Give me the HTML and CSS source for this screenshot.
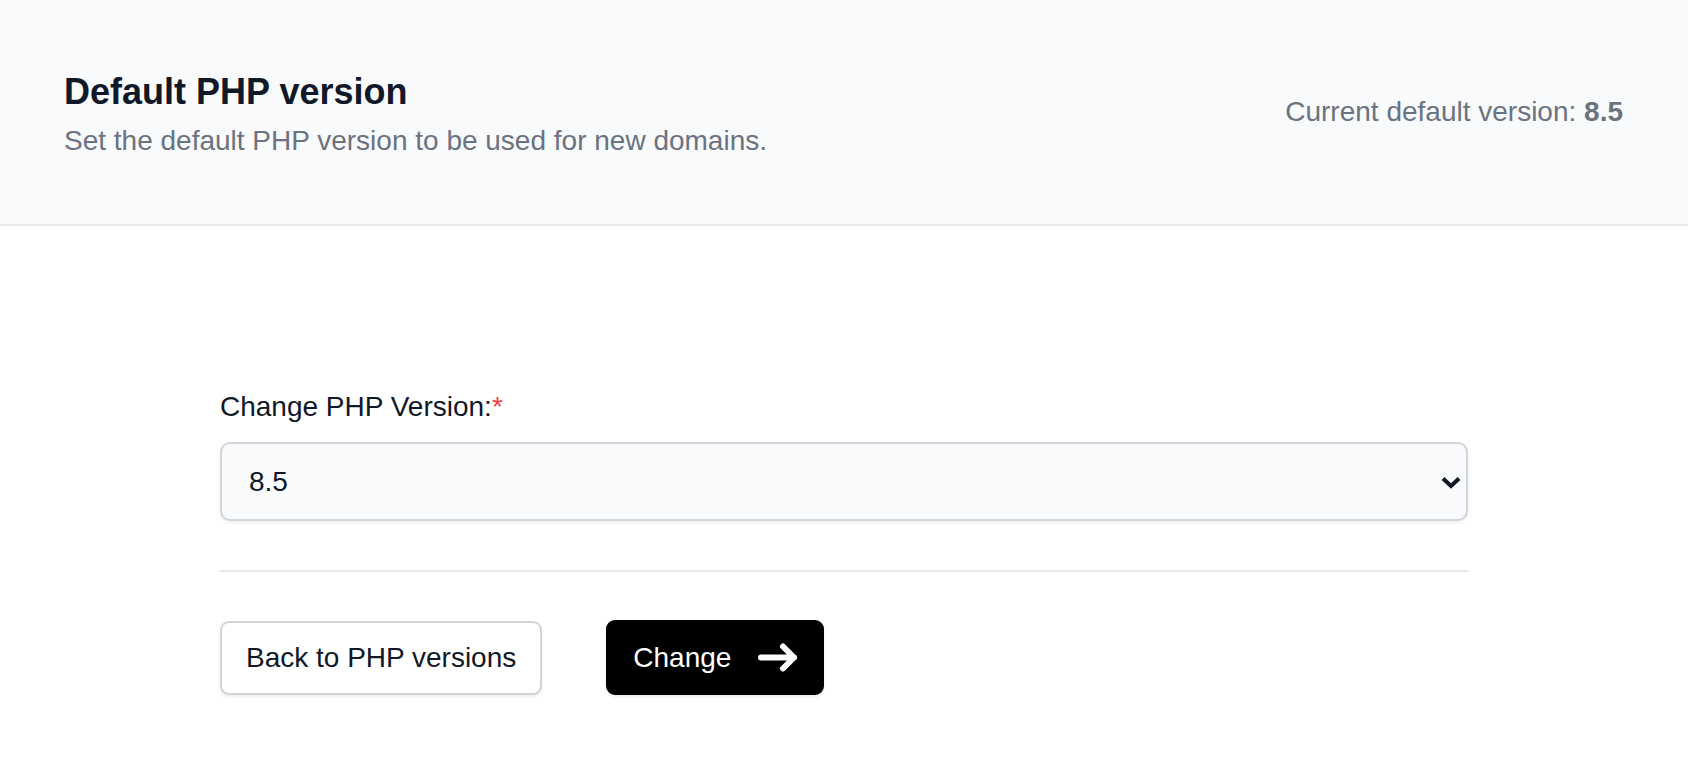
FILE: index.html
```html
<!DOCTYPE html>
<html lang="en">
<head>
    <meta charset="UTF-8">
    <meta name="viewport" content="width=device-width, initial-scale=1.0">
    <title>Default PHP version</title>
    <link rel="stylesheet" href="styles.css">
</head>
<body>
    <header class="page-header">
        <div class="header-text">
            <h1>Default PHP version</h1>
            <p class="subtitle">Set the default PHP version to be used for new domains.</p>
        </div>
        <p class="current-version">Current default version: <strong>8.5</strong></p>
    </header>

    <main class="content">
        <form class="version-form">
            <label for="phpVersion" class="field-label">Change PHP Version:<span class="required">*</span></label>
            <div class="select-wrap">
                <select id="phpVersion" class="field-select">
                    <option selected>8.5</option>
                    <option>8.4</option>
                    <option>8.3</option>
                    <option>8.2</option>
                    <option>8.1</option>
                </select>
                <svg class="select-arrow" width="20" height="13" viewBox="0 0 20 13" aria-hidden="true">
                    <path d="M2 2.5 L10 10 L18 2.5" fill="none" stroke="#111827" stroke-width="4"/>
                </svg>
            </div>

            <hr class="divider">

            <div class="actions">
                <a href="#" class="btn btn-outline">Back to PHP versions</a>
                <button type="submit" class="btn btn-dark">
                    Change
                    <svg width="40" height="29" viewBox="0 0 40 29" aria-hidden="true">
                        <path d="M3 14.5 H36 M25 3.5 L36 14.5 L25 25.5" fill="none" stroke="#fff" stroke-width="6" stroke-linecap="round" stroke-linejoin="round"/>
                    </svg>
                </button>
            </div>
        </form>
    </main>
</body>
</html>
```

FILE: styles.css
```css
body {
    margin: 0;
    font-family: "Liberation Sans", Arial, sans-serif;
    color: #111827;
    background-color: #fff;
}

.page-header {
    display: flex;
    justify-content: space-between;
    align-items: center;
    height: 224px;
    padding: 0 65px 0 64px;
    background-color: #f9fafb;
    border-bottom: 2px solid #e5e7eb;
}

.header-text {
    padding-top: 8px;
}

.header-text h1 {
    margin: 0 0 9px;
    font-size: 36px;
    line-height: 40px;
    font-weight: bold;
    color: #111827;
}

.subtitle {
    margin: 0;
    font-size: 28px;
    line-height: 40px;
    color: #6b7280;
}

.current-version {
    margin: 0;
    font-size: 28px;
    line-height: 40px;
    color: #6b7280;
}

.content {
    padding: 160px 220px 40px;
}

.field-label {
    display: block;
    font-size: 28px;
    line-height: 42px;
    color: #111827;
}

.required {
    color: #ef4444;
}

.select-wrap {
    position: relative;
    margin-top: 14px;
}

.field-select {
    display: block;
    width: 100%;
    box-sizing: border-box;
    height: 79px;
    padding: 16px 60px 16px 27px;
    font-family: inherit;
    font-size: 28px;
    line-height: 42px;
    color: #111827;
    background-color: #f9fafb;
    border: 2px solid #d1d5db;
    border-radius: 10px;
    box-shadow: 0 2px 3px rgba(0, 0, 0, 0.06);
    appearance: none;
    -webkit-appearance: none;
    outline: none;
}

.select-arrow {
    position: absolute;
    right: 7px;
    top: 34px;
    pointer-events: none;
}

.divider {
    margin: 49px 0 0;
    border: 0;
    height: 2px;
    background-color: #e5e7eb;
}

.actions {
    display: flex;
    align-items: center;
    gap: 64px;
    margin-top: 48px;
}

.btn {
    display: inline-flex;
    align-items: center;
    box-sizing: border-box;
    height: 74px;
    padding: 14px 24px;
    font-family: inherit;
    font-size: 28px;
    line-height: 42px;
    border-radius: 9px;
    text-decoration: none;
    cursor: pointer;
}

.btn-outline {
    color: #111827;
    background-color: #fff;
    border: 2px solid #d1d5db;
    box-shadow: 0 2px 3px rgba(0, 0, 0, 0.07);
}

.btn-dark {
    gap: 27px;
    height: 75px;
    padding: 14px 24px 14px 25px;
    color: #fff;
    background-color: #000;
    border: 2px solid #000;
    box-shadow: 0 2px 3px rgba(0, 0, 0, 0.08);
}
```
